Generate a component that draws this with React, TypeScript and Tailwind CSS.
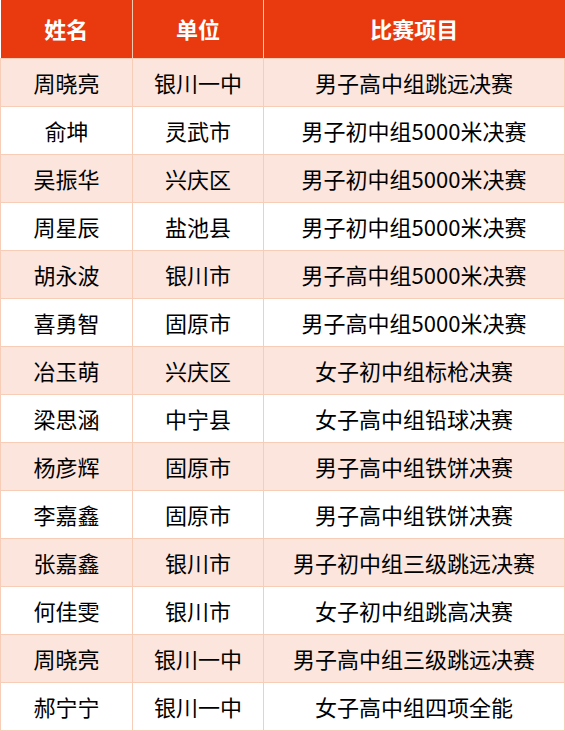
const rows = [
  ["周晓亮", "银川一中", "男子高中组跳远决赛"],
  ["俞坤", "灵武市", "男子初中组5000米决赛"],
  ["吴振华", "兴庆区", "男子初中组5000米决赛"],
  ["周星辰", "盐池县", "男子初中组5000米决赛"],
  ["胡永波", "银川市", "男子高中组5000米决赛"],
  ["喜勇智", "固原市", "男子高中组5000米决赛"],
  ["冶玉萌", "兴庆区", "女子初中组标枪决赛"],
  ["梁思涵", "中宁县", "女子高中组铅球决赛"],
  ["杨彦辉", "固原市", "男子高中组铁饼决赛"],
  ["李嘉鑫", "固原市", "男子高中组铁饼决赛"],
  ["张嘉鑫", "银川市", "男子初中组三级跳远决赛"],
  ["何佳雯", "银川市", "女子初中组跳高决赛"],
  ["周晓亮", "银川一中", "男子高中组三级跳远决赛"],
  ["郝宁宁", "银川一中", "女子高中组四项全能"],
]

export default function App() {
  return (
    <div
      className="w-[565px] h-[731px] bg-white"
      style={{ fontFamily: '"Noto Sans CJK SC", "Noto Sans", sans-serif' }}
    >
      <table className="w-[565px] border-collapse table-fixed">
        <colgroup>
          <col className="w-[132px]" />
          <col className="w-[131px]" />
          <col />
        </colgroup>
        <thead>
          <tr className="h-[58px] bg-[#e9390e] text-white text-[22px] font-bold">
            <th className="border-r border-[#f6c9b3]">姓名</th>
            <th className="border-r border-[#f6c9b3]">单位</th>
            <th>比赛项目</th>
          </tr>
        </thead>
        <tbody>
          {rows.map((r, i) => (
            <tr
              key={i}
              className={`h-[48px] text-[22px] text-black text-center ${i % 2 === 0 ? "bg-[#fbe5dc]" : "bg-white"}`}
            >
              {r.map((c, j) => (
                <td key={j} className="border border-[#f7cdb8] p-0 leading-none">
                  {c}
                </td>
              ))}
            </tr>
          ))}
        </tbody>
      </table>
    </div>
  )
}
